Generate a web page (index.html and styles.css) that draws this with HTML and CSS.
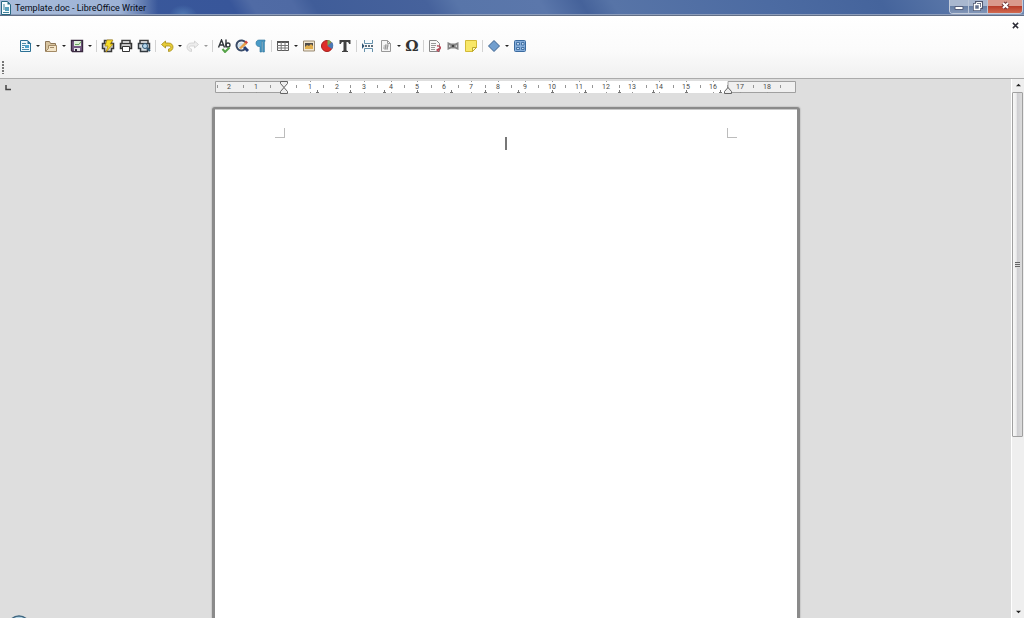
FILE: index.html
```html
<!DOCTYPE html>
<html lang="en">
<head>
<meta charset="utf-8">
<title>Template.doc - LibreOffice Writer</title>
<link rel="stylesheet" href="styles.css">
</head>
<body>
<div class="app">
  <header class="titlebar">
    <svg class="app-icon" viewBox="0 0 12 14" aria-hidden="true"><path d="M1.500.5h6l3 3v10h-9z" fill="#f5fbfd" stroke="#286982"/><path d="M7.500.5v3h3z" fill="#286982"/><path d="M3 4h2M3 6h2M3 8h2M3 11.500h6" stroke="#42839c"/><path d="M5 6h4v4H5z" fill="#58a1bd"/></svg>
    <h1 class="title">Template.doc - LibreOffice Writer</h1>
    <div class="window-buttons">
      <button class="win" aria-label="Minimize"><svg viewBox="0 0 12 12"><path d="M2 5.500h8v3H2z" fill="#fff" stroke="#555e7b"/></svg></button>
      <button class="win" aria-label="Restore"><svg viewBox="0 0 12 12"><path d="M4.500 1.500h5v5h-5zM2.500 3.500h5v5h-5z" fill="none" stroke="#4d566f" stroke-width="3"/><path d="M4.500 1.500h5v5h-5z" fill="none" stroke="#fff"/><path d="M2.500 3.500h5v5h-5z" fill="#63708c" stroke="#fff" stroke-width="1.500"/></svg></button>
      <button class="win close" aria-label="Close"><svg viewBox="0 0 12 12"><path d="M4 2l5 5M9 2L4 7" stroke="#713434" stroke-width="4"/><path d="M4 2l5 5M9 2L4 7" stroke="#fff" stroke-width="2"/></svg></button>
    </div>
  </header>

  <section class="chrome">
    <div class="menu-row">
      <button class="doc-close" aria-label="Close document"><svg viewBox="0 0 8 8"><path d="M1 1l6 6M7 1L1 7" stroke="#2b2b35" stroke-width="1.700"/></svg></button>
    </div>
    <div class="toolbar" role="toolbar" aria-label="Standard">
      <button class="tool" aria-label="New"><svg viewBox="0 0 14 14"><path d="M2.500 1.500h7l3 3v8h-10z" fill="#eef8fc" stroke="#2d7195"/><path d="M9.500 1v4h4z" fill="#2d7195"/><path d="M4 4.500h4M4 6.500h3M4 8.500h2M4 10.500h7" stroke="#4b8ba9"/><path d="M7 6h4v3H7z" fill="#4da3cc"/></svg></button>
      <button class="drop" aria-label="New options"></button>
      <button class="tool" aria-label="Open"><svg viewBox="0 0 14 14"><path d="M1.500 12V2.500h4l1 2h5V12z" fill="#d8c49f" stroke="#8d7657"/><path d="M4.500 6.500h8v6h-11l3-3z" fill="#f3e5c9" stroke="#a38a65"/><path d="M6 8.500h4" stroke="#a38a65"/></svg></button>
      <button class="drop" aria-label="Open options"></button>
      <button class="tool" aria-label="Save"><svg viewBox="0 0 14 14"><path d="M1.500 1.500h11v11h-10l-1-1z" fill="#765d84" stroke="#39293f" stroke-width="1.400"/><path d="M4 2h7v5H4z" fill="#dff0da"/><path d="M5 5.500h4l2-3" fill="none" stroke="#69a65c"/><path d="M4 9h6v3H4z" fill="#e4e4e4"/><path d="M5 10h2v2H5z" fill="#30273b"/></svg></button>
      <button class="drop" aria-label="Save options"></button>
      <span class="sep"></span>
      <button class="tool" aria-label="Export as PDF"><svg viewBox="0 0 14 14"><path d="M3.500 5V1.500h7V5M1.500 4.500h11v5h-2v3h-7v-3h-2z" fill="#d5d5d5" stroke="#393939" stroke-width="1.500"/><path d="M6 1h6L9 5h3l-7 8 2-6H4z" fill="#f6de27" stroke="#b48e10" stroke-width=".8"/></svg></button>
      <button class="tool" aria-label="Print"><svg viewBox="0 0 14 14"><path d="M3 5V1.500h8V5" fill="#fff" stroke="#3c3c3c" stroke-width="1.500"/><path d="M1.500 4.500h11v5h-11z" fill="#aaa" stroke="#343434" stroke-width="1.500"/><path d="M3.500 7.500h7v5h-7z" fill="#fff" stroke="#343434"/><path d="M3 6h8" stroke="#eee"/></svg></button>
      <button class="tool" aria-label="Print preview"><svg viewBox="0 0 14 14"><path d="M3 5V1.500h8V5" fill="#fff" stroke="#3c3c3c" stroke-width="1.500"/><path d="M1.500 4.500h11v5h-2v3h-7v-3h-2z" fill="#d5dce0" stroke="#343b40" stroke-width="1.500"/><circle cx="8" cy="7" r="2.500" fill="#b8d8ed" stroke="#315875"/><path d="M10 9l3 3" stroke="#315875" stroke-width="2"/></svg></button>
      <span class="sep"></span>
      <button class="tool" aria-label="Undo"><svg viewBox="0 0 14 14"><path d="M5.500 2L1.500 5.500 5.500 9V7h3c3 0 3 2.500 0 3v2.500c6-.5 6-8.500 0-8.500h-3z" fill="#e6cb37" stroke="#a38a16" stroke-width=".8"/></svg></button>
      <button class="drop" aria-label="Undo history"></button>
      <button class="tool" aria-label="Redo" disabled><svg viewBox="0 0 14 14"><path d="M8.500 2L12.500 5.500 8.500 9V7h-3c-3 0-3 2.500 0 3v2.500c-6-.5-6-8.500 0-8.500h3z" fill="#ededed" stroke="#cdcdcd" stroke-width=".8"/></svg></button>
      <button class="drop muted" aria-label="Redo history" disabled></button>
      <span class="sep"></span>
      <button class="tool" aria-label="Spelling"><svg viewBox="0 0 14 14"><path d="M1.500 8.500L4.500 1l3 7.500M2.500 6h4M9 .5v8" fill="none" stroke="#30353a" stroke-width="1.400"/><circle cx="11" cy="6" r="2" fill="none" stroke="#30353a" stroke-width="1.300"/><path d="M5.500 10l2.500 3 4.500-4.500" fill="none" stroke="#55a348" stroke-width="2"/></svg></button>
      <button class="tool" aria-label="Find and replace"><svg viewBox="0 0 14 14"><path d="M10.500 3.500A5 5 0 1 0 10 10" fill="none" stroke="#394b67" stroke-width="2"/><circle cx="6" cy="6.500" r="3" fill="#cce1ef"/><path d="M9 8l4 4" stroke="#263f76" stroke-width="3"/><path d="M4 9l6-6 2 2-6 5z" fill="#e4a04b"/><path d="M9.500 3L11 1.500l2 2L11.500 5z" fill="#cd453e"/></svg></button>
      <button class="tool" aria-label="Formatting marks"><svg viewBox="0 0 14 14"><path d="M12 1H6C2 1 2 7.500 6 7.500h1V13h1.700V2.500h1V13h1.700V2.500h.6z" fill="#4a9bc7" stroke="#287097" stroke-width=".6"/></svg></button>
      <span class="sep"></span>
      <button class="tool" aria-label="Insert table"><svg viewBox="0 0 14 14"><path d="M1.500 2.500h11v9h-11z" fill="#fff" stroke="#5b5b5b"/><path d="M1 2h12v2H1z" fill="#555"/><path d="M1 6.500h12M1 9h12M5.200 3v9M9 3v9" stroke="#777"/></svg></button>
      <button class="drop" aria-label="Table size"></button>
      <button class="tool" aria-label="Insert image"><svg viewBox="0 0 14 14"><path d="M1.500 2h11v10h-11z" fill="#f1e6d0" stroke="#9a8b75"/><path d="M3 4h8v6H3z" fill="#504c49"/><path d="M3 8l2-2 2 1 2-2 2 2v3H3z" fill="#e1ae4c"/></svg></button>
      <button class="tool" aria-label="Insert chart"><svg viewBox="0 0 14 14"><circle cx="7" cy="7" r="5.500" fill="#df2e29" stroke="#a51f1c"/><path d="M7.500 7V1a6 6 0 0 1 4 2z" fill="#74a956"/><path d="M7.500 7l4.500-4a6 6 0 0 1 0 7z" fill="#497ab4"/></svg></button>
      <button class="tool" aria-label="Insert text box"><svg viewBox="0 0 14 14"><path d="M1.500 1h11v4h-1.500c-.2-1.500-.7-2-2.500-2v8c0 .7.500 1 1.500 1v1h-6v-1c1 0 1.500-.3 1.500-1V3C3.700 3 3.200 3.500 3 5H1.500z" fill="#414141"/></svg></button>
      <span class="sep"></span>
      <button class="tool" aria-label="Insert page break"><svg viewBox="0 0 14 14"><path d="M3.500 1v3.500h8V1M3.500 13V9.500h8V13" fill="#f7fbfd" stroke="#6691ab"/><path d="M1 7h12" stroke="#293c4c" stroke-width="1.500" stroke-dasharray="2 1"/><path d="M1 4l2.500 3L1 10" fill="#315878"/></svg></button>
      <button class="tool" aria-label="Insert field"><svg viewBox="0 0 14 14"><path d="M2.500 1.500h6l3 3v8h-9z" fill="#f5f5f5" stroke="#999"/><path d="M8.500 1.500v3h3" fill="none" stroke="#999"/><path d="M4.500 7h5M4 9h5M7 5l-1 6M9 5l-1 6" stroke="#888" stroke-width=".8"/></svg></button>
      <button class="drop" aria-label="Field options"></button>
      <button class="tool omega" aria-label="Insert special character">Ω</button>
      <span class="sep"></span>
      <button class="tool" aria-label="Insert footnote"><svg viewBox="0 0 14 14"><path d="M1.500 1.500h7l3 3v8h-10z" fill="#f8f8f8" stroke="#888"/><path d="M3 4.500h5M3 6.500h5M3 8.500h4M3 10.500h4" stroke="#999"/><path d="M9 7c4-1 5 4 0 4m2-1.500L9 11l2 1.500" fill="none" stroke="#b74050" stroke-width="1.300"/></svg></button>
      <button class="tool" aria-label="Insert cross-reference"><svg viewBox="0 0 14 14"><path d="M1.500 3L5 4.500h4L12.500 3v8L9 9.500H5L1.500 11z" fill="#858585"/><path d="M3 6l2 1-2 1.500zM11 6L9 7l2 1.500z" fill="#ddd"/><path d="M6 6h2v2H6z" fill="#444"/></svg></button>
      <button class="tool" aria-label="Insert comment"><svg viewBox="0 0 14 14"><path d="M1.500 1.500h11v7l-4 4h-7z" fill="#f8e767" stroke="#d3ba37"/><path d="M8.500 12.500v-4h4z" fill="#fff8b6" stroke="#bda92c"/></svg></button>
      <span class="sep"></span>
      <button class="tool" aria-label="Basic shapes"><svg viewBox="0 0 14 14"><path d="M7 1.500L12.500 7 7 12.500 1.500 7z" fill="#729fcf" stroke="#3c6390"/></svg></button>
      <button class="drop" aria-label="Shape options"></button>
      <button class="tool" aria-label="Show draw functions"><svg viewBox="0 0 14 14"><rect x="1.500" y="1.500" width="11" height="11" rx="1" fill="#86aedb" stroke="#3b6b9f"/><path d="M3.500 3.500h3V6h-3zM8.500 3.500H11V6H8.500zM3.500 8.500h3v2h-3zM8.500 8.500H11v2H8.500z" fill="#c4daf1" stroke="#3b6b9f" stroke-width=".9"/></svg></button>
    </div>
    <div class="grip-row"><span class="grip"></span></div>
  </section>

  <main class="workspace">
    <div class="canvas">
      <div class="ruler-row">
        <svg class="tab-kind" viewBox="0 0 6 6" aria-hidden="true"><path d="M1 0v4.500h5" fill="none" stroke="#444" stroke-width="1.500"/></svg>
        <svg class="ruler" id="ruler" viewBox="0 0 582 14" role="img" aria-label="Horizontal ruler">
          <path d="M69 0h444v12H69z" fill="#fff"/>
          <path d="M69 .5H.5v11H69M513 .5h67.500v11H513z" fill="#f0f0f0" stroke="#a0a0a0"/>
          <g id="marks"></g>
          <path d="M65.500.5h7v2L69 6.500l-3.500-4zM69 6.500l3.500 4v2h-7v-2z" fill="#eee" stroke="#646464"/>
          <path d="M513 6.500l3.500 4v2h-7v-2z" fill="#eee" stroke="#646464"/>
        </svg>
      </div>
      <article class="page" aria-label="Document">
        <span class="corner left"></span>
        <span class="caret"></span>
        <span class="corner right"></span>
      </article>
      <svg class="orb" viewBox="0 0 24 24" aria-hidden="true"><circle cx="12" cy="12" r="11" fill="#b7d5e5" stroke="#3e6680" stroke-width="1.500"/></svg>
    </div>
    <div class="scrollbar">
      <button class="scroll-arrow" aria-label="Scroll up"><svg viewBox="0 0 6 4"><path d="M0 3.500L3 .5l3 3z" fill="#222"/></svg></button>
      <div class="track"><div class="thumb"><span class="thumb-grip"></span></div></div>
      <button class="scroll-arrow" aria-label="Scroll down"><svg viewBox="0 0 6 4"><path d="M0 .5l3 3 3-3z" fill="#222"/></svg></button>
    </div>
  </main>
</div>
<script src="ruler.js"></script>
</body>
</html>
```
FILE: styles.css
```css
* { box-sizing: border-box; }
body { margin: 0; font-family: "Open Sans", "Noto Sans", sans-serif; }
button { margin: 0; padding: 0; border: 0; background: none; color: inherit; display: flex; align-items: center; justify-content: center; }
.app { height: 100vh; display: flex; flex-direction: column; overflow: hidden; }

.titlebar {
  height: 16px; flex: none; display: flex; align-items: center; gap: 3px;
  border-bottom: 1px solid #626f86; box-shadow: inset 0 -1px #8d9dbb; overflow: hidden;
  background:
    radial-gradient(ellipse 14px 10px at 183px 15px, #5079b3, transparent),
    linear-gradient(90deg, #a9bddb 0, #9db2d5 120px, #5d78ae 145px, transparent 158px),
    linear-gradient(58deg, #3b5a9b 0, #38569a 23%, #506ba5 25%, #4f6aa4 29%, #405d99 31%, #46629c 42%, #5875a9 45%, #5b77ab 53%, #45629a 57%, #5774a7 60%, #4c6ba2 75%, #45649c 86%, #6d88b4 100%);
}
.app-icon { width: 12px; height: 14px; flex: none; }
.title { margin: 0; flex: 1; font: 9px/14px Roboto, "Open Sans", sans-serif; color: #050a14; white-space: nowrap; }
.window-buttons { align-self: flex-start; display: flex; height: 14px; margin-right: 1px; border: 1px solid #c4cddc; border-top: 0; border-radius: 0 0 4px 4px; overflow: hidden; }
.win { width: 19px; border-right: 1px solid #b9c4d6; background: linear-gradient(#a9b7cf 45%, #687fa5 50%, #8296b8); }
.win.close { width: 34px; border: 0; background: linear-gradient(#d9998c 45%, #b83d2a 50%, #d16a50); }
.win svg { width: 12px; height: 12px; }

.chrome { flex: none; border-bottom: 1px solid #ababab; background: linear-gradient(#fff, #fbfbfb 55%, #f0f0f0); }
.menu-row { height: 19px; display: flex; justify-content: flex-end; align-items: center; padding-right: 5px; }
.doc-close { width: 8px; height: 8px; }
.doc-close svg { width: 7px; height: 7px; }
.toolbar { height: 22px; display: flex; align-items: center; padding-left: 16px; }
.tool { width: 18px; height: 20px; }
.tool svg { width: 14px; height: 14px; }
.omega { font: bold 15px/18px "DejaVu Serif", serif; color: #333; }
.drop { width: 8px; height: 20px; }
.drop::before { content: ""; border: 2px solid transparent; border-top-color: #222; border-bottom: 0; }
.drop.muted::before { border-top-color: #999; }
.sep { width: 5px; height: 12px; background: linear-gradient(#d2d2d2, #d2d2d2) center / 1px 100% no-repeat; }
.grip-row { height: 21px; display: flex; align-items: center; padding-left: 2px; }
.grip { width: 2px; height: 13px; background: repeating-linear-gradient(#777 0 2px, transparent 2px 3px); }

.workspace { flex: 1; min-height: 0; display: flex; background: #dedede; }
.canvas { position: relative; flex: 1; min-width: 0; display: flex; flex-direction: column; align-items: center; overflow: hidden; }
.ruler-row { width: 100%; flex: none; display: grid; grid-template-columns: 1fr 582px 1fr; padding-top: 2px; }
.tab-kind { width: 6px; height: 6px; margin: 4px 0 0 5px; }
.ruler { width: 582px; height: 14px; }
.ruler text { font: 7px Roboto, "Open Sans", sans-serif; fill: #484848; text-anchor: middle; }
.page {
  flex: 1; width: 588px; margin-top: 12px; padding: 19px 60px 0; display: flex; align-items: flex-start; justify-content: space-between;
  background: #fff; border: 3px solid #8a8a8a; border-top-width: 2px; border-bottom: 0; border-radius: 3px 3px 0 0;
  box-shadow: 0 0 1px 1px #cacaca, inset 0 1px #c9c9c9;
}
.corner { width: 10px; height: 10px; border-bottom: 1px solid #bcbcbc; }
.corner.left { border-right: 1px solid #bcbcbc; }
.corner.right { border-left: 1px solid #bcbcbc; }
.caret { width: 2px; height: 13px; margin-top: 9px; background: #777; }
.orb { position: absolute; left: 7px; bottom: -21px; width: 24px; height: 24px; }

.scrollbar { width: 13px; flex: none; display: flex; flex-direction: column; background: #efefef; border-left: 1px solid #fff; }
.scroll-arrow { height: 12px; flex: none; }
.scroll-arrow svg { width: 5px; height: 4px; }
.track { flex: 1; }
.thumb { height: 67%; margin: 1px 1px 0 0; display: flex; align-items: center; justify-content: center; border: 1px solid #a0a0a0; border-radius: 1px; background: linear-gradient(90deg, #f7f7f7 0, #eee 35%, #cfcfd2 50%, #dcdcdc); }
.thumb-grip { width: 5px; height: 6px; background: repeating-linear-gradient(#666 0 1px, #ddd 1px 2px); }
```
FILE: ruler.js
```js
const NS = "http://www.w3.org/2000/svg";
const marks = document.getElementById("marks");
const ORIGIN = 69;
const CM = 26.88;

function tick(x, y, length) {
  const line = document.createElementNS(NS, "path");
  line.setAttribute("d", `M${Math.round(x) - 0.5} ${y}v${length}`);
  line.setAttribute("stroke", "#959595");
  marks.append(line);
}

for (let cm = -2; cm <= 18; cm++) {
  const x = ORIGIN + cm * CM;
  if (cm !== 0) {
    const label = document.createElementNS(NS, "text");
    label.setAttribute("x", Math.round(x) - 1);
    label.setAttribute("y", 8);
    label.textContent = Math.abs(cm);
    marks.append(label);
    tick(x, 0, 1);
    tick(x, 11, 1);
  }
  tick(x + CM / 2, 4, 3);
}
tick(3, 4, 3);

for (let n = 1; n <= 13; n++) {
  const x = Math.round(ORIGIN + n * CM * 1.25) - 1;
  const stop = document.createElementNS(NS, "path");
  stop.setAttribute("d", `M${x - 1} 11.500h3M${x + 0.5} 9v2`);
  stop.setAttribute("stroke", "#777");
  marks.append(stop);
}
```
